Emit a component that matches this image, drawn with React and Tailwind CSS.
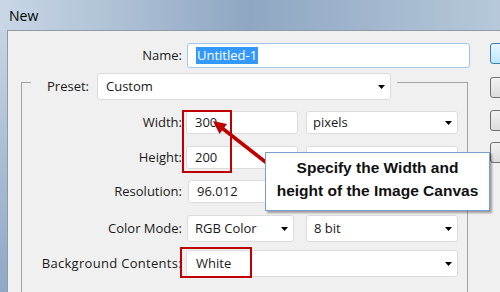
function Arrow() {
    return (
        <svg width="7" height="4" viewBox="0 0 7 4" className="shrink-0">
            <path d="M0 0H7L3.5 4Z" fill="#000" />
        </svg>
    )
}

function Field({ w, h = 23, children, focus = false, ml = "" }) {
    return (
        <div
            className={`${ml} ${w} bg-white rounded-[3px] border flex items-center pl-[8px] ${focus ? "border-[#a3c6ea]" : "border-[#dcdcdc]"}`}
            style={{ height: h }}
        >
            {children}
        </div>
    )
}

function Select({ w, h = 23, value, ml = "", pl = "pl-[7px]" }) {
    return (
        <div
            className={`${ml} ${w} ${pl} bg-white rounded-[3px] border border-[#dcdcdc] flex items-center justify-between pr-[5px]`}
            style={{ height: h }}
        >
            <span>{value}</span>
            <Arrow />
        </div>
    )
}

function Label({ w, children, extra = "" }) {
    return <span className={`${w} ${extra} shrink-0 text-right whitespace-nowrap`}>{children}</span>
}

export default function App() {
    return (
        <div className="relative w-[500px] h-[292px] overflow-hidden bg-[#f0f0f0] text-[13px] text-[#1a1a1a] font-['Open_Sans',sans-serif]">
            <div className="h-[30px] flex items-center pl-[9px] bg-linear-to-r from-[#c9d7e6] via-[#8fa7c2] to-[#b6c8da] text-[14px] text-black">
                New
            </div>
            <div className="flex h-[262px]">
                <div className="w-[7px] shrink-0 bg-linear-to-b from-[#c6d4e2] via-[#a9bdd2] to-[#8ea8c6]" />
                <div className="flex-1 flex border-l border-t border-[#8d9aa8] bg-[#f0f0f0]">
                    <div className="w-[482px] shrink-0 flex flex-col">
                        <div className="mt-[12px] flex items-center h-[25px]">
                            <Label w="w-[174px]">Name:</Label>
                            <Field w="w-[283px]" h={25} focus ml="ml-[5px]">
                                <span className="bg-[#3399ff] text-white px-[1px] leading-[17px]">Untitled-1</span>
                            </Field>
                        </div>
                        <fieldset className="-mt-[4px] ml-[13px] w-[447px] border border-[#a3a3a3] pb-[60px]">
                            <legend className="ml-[9px] pt-[9px] pl-[16px] pr-[6px]">
                                <div className="flex items-center">
                                    <span className="w-[50px] shrink-0">Preset:</span>
                                    <Select w="w-[294px]" h={27} value="Custom" pl="pl-[8px]" />
                                </div>
                            </legend>
                            <div className="mt-[11px] flex items-center h-[23px]">
                                <Label w="w-[160px]">Width:</Label>
                                <Field w="w-[112px]" ml="ml-[4px]">300</Field>
                                <Select w="w-[152px]" ml="ml-[8px]" value="pixels" pl="pl-[6px]" />
                            </div>
                            <div className="mt-[12px] flex items-center h-[23px]">
                                <Label w="w-[160px]">Height:</Label>
                                <Field w="w-[112px]" ml="ml-[4px]">200</Field>
                                <Select w="w-[152px]" ml="ml-[8px]" value="" pl="pl-[6px]" />
                            </div>
                            <div className="mt-[11px] flex items-center h-[23px]">
                                <Label w="w-[160px]">Resolution:</Label>
                                <Field w="w-[110px]" ml="ml-[6px]">96.012</Field>
                                <Select w="w-[152px]" ml="ml-[8px]" value="" pl="pl-[6px]" />
                            </div>
                            <div className="mt-[12px] flex items-center h-[27px]">
                                <Label w="w-[160px]">Color Mode:</Label>
                                <Select w="w-[107px]" h={27} ml="ml-[5px]" value="RGB Color" />
                                <Select w="w-[152px]" h={27} ml="ml-[12px]" value="8 bit" />
                            </div>
                            <div className="mt-[8px] flex items-center h-[27px]">
                                <Label w="w-[160px]" extra="tracking-[0.3px]">Background Contents:</Label>
                                <Select w="w-[272px]" h={27} ml="ml-[4px]" value="White" pl="pl-[9px]" />
                            </div>
                        </fieldset>
                    </div>
                    <div className="flex flex-col pt-[12px]">
                        <div className="w-[80px] h-[21px] rounded-[3px] border border-[#3c7fb1] bg-linear-to-b from-[#eaf6fd] to-[#bee6fd]" />
                        <div className="mt-[13px] w-[80px] h-[21px] rounded-[3px] border border-[#707070] bg-linear-to-b from-[#f2f2f2] to-[#dcdcdc]" />
                        <div className="mt-[12px] w-[80px] h-[21px] rounded-[3px] border border-[#707070] bg-linear-to-b from-[#f2f2f2] to-[#dcdcdc]" />
                        <div className="mt-[11px] w-[80px] h-[21px] rounded-[3px] border border-[#707070] bg-linear-to-b from-[#f2f2f2] to-[#dcdcdc]" />
                    </div>
                </div>
            </div>

            <div className="absolute left-[182px] top-[110px] w-[50px] h-[63px] border-2 border-[#c00000]" />
            <div className="absolute left-[180px] top-[247px] w-[72px] h-[31px] border-2 border-[#c00000]" />

            <svg className="absolute left-0 top-0" width="500" height="292">
                <line x1="268" y1="164" x2="222" y2="128" stroke="#c00000" strokeWidth="3.5" />
                <polygon points="213,121 227,124 219.5,134" fill="#c00000" />
            </svg>

            <div className="absolute left-[265px] top-[152px] w-[225px] h-[59px] bg-white border border-[#7aa0cf] shadow-[2px_2px_2px_rgba(0,0,0,0.35)] pt-[3px] text-center font-['Liberation_Sans',Arial,sans-serif] font-bold text-[15.5px] leading-[23px] text-[#111] whitespace-nowrap">
                Specify the Width and
                <br />
                height of the Image Canvas
            </div>
        </div>
    )
}
